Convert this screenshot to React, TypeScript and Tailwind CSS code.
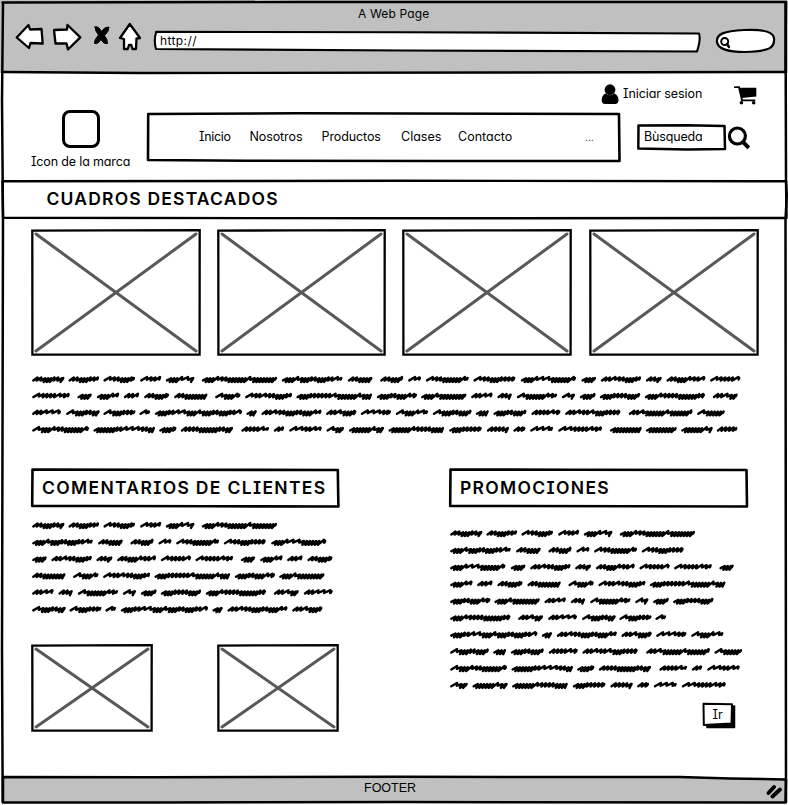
import React from "react";

const sketchFont = "font-['Inter','Noto_Sans',sans-serif] [font-feature-settings:'cv11','cv08','ss03'] text-black whitespace-nowrap";

/* Hand-drawn outline laid over a panel; d is drawn in the panel's own pixels. */
function Outline({ d, width = 2.6, fill = "none" }: { d: string; width?: number; fill?: string }) {
  return (
    <svg className="pointer-events-none absolute inset-0 h-full w-full overflow-visible" aria-hidden="true">
      <path d={d} fill={fill} stroke="#000" strokeWidth={width} strokeLinejoin="round" strokeLinecap="round" />
    </svg>
  );
}

function Picture({ w, h }: { w: number; h: number }) {
  return (
    <svg width={w} height={h} viewBox={`0 0 ${w} ${h}`} className="block shrink-0">
      <path d={`M5 5L${w - 5} ${h - 5}M${w - 5} 5L5 ${h - 5}`} stroke="#585858" strokeWidth="3" strokeLinecap="round" />
      <path d={`M1.3 1.6L${w * 0.45} 1.4L${w - 1.3} 1.2L${w - 1.4} ${h - 1.3}L${w * 0.3} ${h - 1.4}L1.4 ${h - 1.3}Z`} fill="none" stroke="#000" strokeWidth="2.3" />
    </svg>
  );
}

/* Scribbled filler words as [width, gap after], in thirds of a pixel. */
const WORDS: [number, number][] = [
  [98, 11], [93, 12], [96, 14], [64, 13], [87, 21], [227, 13],
  [183, 15], [75, 22], [70, 14], [40, 13], [130, 13], [127, 15],
  [167, 15], [45, 13], [122, 13], [49, 13], [118, 13], [92, 12],
  [114, 22], [44, 14], [68, 13], [47, 14], [76, 14], [101, 22],
  [77, 13], [142, 12], [228, 13], [122, 11], [137, 13], [65, 14],
  [44, 14], [122, 13], [41, 13], [48, 12], [122, 13], [182, 22],
  [76, 14], [88, 14], [102, 10], [97, 11], [33, 13], [263, 12],
  [32, 13], [181, 13], [92, 12], [92, 13], [98, 13], [117, 12],
  [40, 13], [100, 14], [88, 13], [167, 24], [192, 13], [84, 13],
  [172, 12], [186, 11], [53, 12], [158, 24], [84, 13], [32, 14],
  [99, 13], [54, 13], [107, 12], [168, 14], [99, 14], [68, 12],
  [37, 13], [70, 14], [133, 22], [97, 11], [94, 12], [96, 11], [63, 0],
];

/* One word: low tight strokes for round letters, long open strokes for thin ones. */
function scribble(x0: number, width: number, seed: number) {
  const end = x0 + width - 1.4;
  let x = x0 + 1.3;
  let n = (seed * 53 + 17) % 101;
  let d = `M${x.toFixed(1)} 10.4`;
  while (x < end - 3.6) {
    n = (n * 37 + 11) % 101;
    const kind = n % 3;
    const teeth = kind === 0 ? 3 : kind === 1 ? 2 : 1;
    const step = kind === 0 ? 3.1 : kind === 1 ? 3.8 : 6;
    const high = kind === 0 ? 8.2 : kind === 1 ? 7.4 : 7;
    const low = kind === 0 ? 12 : kind === 1 ? 10.6 : 9.8;
    for (let i = 0; i < teeth && x < end - 3.6; i++) {
      const top = Math.min(x + (kind === 2 ? 5.8 : 4.2), end);
      d += `L${top.toFixed(1)} ${high}`;
      x += step;
      if (x < end - 1) d += `L${(x - 0.4).toFixed(1)} ${low}`;
    }
  }
  return d + `L${end.toFixed(1)} 8L${(end - 0.7).toFixed(1)} 9.6`;
}

function Filler({ breaks, pitch, width }: { breaks: number[]; pitch: number; width: number }) {
  const rows = breaks.slice(0, -1).map((start, row) => {
    let x = 0;
    return WORDS.slice(start, breaks[row + 1]).map(([w, gap], i) => {
      const path = scribble(x, w / 3, start + i);
      x += (w + gap) / 3;
      return <path key={i} d={path} transform={`translate(0 ${row * pitch})`} />;
    });
  });
  return (
    <svg width={width} height={rows.length * pitch} className="block overflow-visible" fill="none" stroke="#000" strokeWidth="2.4" strokeLinejoin="round" strokeLinecap="round">
      {rows}
    </svg>
  );
}

function BrowserBar() {
  return (
    <header className="relative h-[73px] bg-[#c0c0c0]">
      <div className={`${sketchFont} pt-[6px] pl-[358px] text-[12px] leading-4 tracking-[0.15px]`}>A Web Page</div>
      <div className="flex pl-[14px]">
        <svg width="132" height="32" viewBox="14 22 132 32" fill="#fff" stroke="#000" strokeWidth="2.3" strokeLinejoin="round" strokeLinecap="round">
          <path d="M16.7 37.5L28.5 25L30 29.5L41.5 29L42.7 43.5L30.5 43L29 48Z" />
          <path d="M54 30L67 29.5L67.5 25L80.3 37.4L68 49.5L66.5 43.5L55.5 43.5Z" />
          <path d="M129.8 24L140 38L136.5 38.5L136 49L132.5 49L131.3 45L129 45L127.8 49L124 49L124 39L120 38Z" />
          <path d="M95 27Q98.5 25.5 101.5 31.5Q104.5 26.5 109 27Q109 31.5 104.5 35.5Q107.5 39 107.5 43.5Q103.5 44.5 101 39.5Q98 44.5 94.5 43.5Q94 40 98.5 35Q95 31 95 27Z" fill="#000" strokeWidth="1" />
        </svg>
        <div className="relative mt-[9px] ml-[8px] h-[20px] w-[547px]">
          <Outline fill="#fff" width={2.1} d="M2.2 .8L250 1.2L545 2.5Q547 8 543 20.5L250 19.5L2 18Q-.5 10 2.2 .8Z" />
          <span className={`${sketchFont} relative block pt-[2px] pl-[6px] text-[12px] leading-4 tracking-[0.4px]`}>http://</span>
        </div>
        <svg width="64" height="32" viewBox="712 22 64 32" className="ml-[11px]" fill="#fff" stroke="#000" strokeWidth="2.2" strokeLinecap="round">
          <path d="M717 42C716 34 724 31 744 30C763 29 773 32 774 38C775 48 770 51 745 52C728 52 718 49 717 42Z" />
          <circle cx="724.7" cy="41.5" r="3.5" strokeWidth="1.9" />
          <path d="M727 44L729 47" strokeWidth="2.4" />
        </svg>
      </div>
      <Outline width={2.4} d="M2.5 2.5L300 2L786 2L785.5 72L500 72.5L140 73L3 72" />
    </header>
  );
}

function SiteHeader() {
  return (
    <section className="h-[107px]">
      <div className="flex h-[37px] items-start pt-[10px] pl-[601px]">
        <svg width="19" height="22" viewBox="0 0 19 22" className="shrink-0">
          <circle cx="9" cy="6.7" r="5.4" />
          <path d="M4.5 10.5C2 11.5 .8 14 .7 17Q.7 21 4 21H14Q17.5 21 17.5 17C17.4 14 16 11.5 13.5 10.5Q9 14 4.5 10.5Z" />
        </svg>
        <span className={`${sketchFont} mt-[3px] ml-[3px] w-[111px] text-[12.5px] leading-4 tracking-[-0.08px]`}>Iniciar sesion</span>
        <svg width="23" height="20" viewBox="0 0 23 20" className="mt-[2px] shrink-0">
          <path d="M.8 2.2H5L8 15.3H20.5" fill="none" stroke="#000" strokeWidth="1.8" strokeLinecap="round" />
          <path d="M5.5 2.8H22.3V11.6L7.5 13Z" />
          <circle cx="7.4" cy="17.7" r="1.8" /><circle cx="19.7" cy="17.7" r="1.8" />
        </svg>
      </div>
      <div className="flex pl-[31px]">
        <div className="w-[116px]">
          <div className="ml-[30.5px] h-[38px] w-[38px] rounded-[8px] border-[3px] border-black" />
          <div className={`${sketchFont} mt-[6px] text-[12.5px] leading-4 tracking-[-0.15px]`}>Icon de la marca</div>
        </div>
        <nav className={`${sketchFont} relative mt-[2px] flex h-[50px] w-[474px] items-center text-[12.5px] leading-4`}>
          <Outline d="M1.2 2L150 1.3L472 2L472.5 49L300 49L100 48.8L1 48Z" />
          <span className="ml-[52px] w-[50.5px] pb-px tracking-[-0.3px]">Inicio</span>
          <span className="w-[72px] pb-px tracking-[-0.1px]">Nosotros</span>
          <span className="w-[79.5px] pb-px tracking-[-0.1px]">Productos</span>
          <span className="w-[57px] pb-px">Clases</span>
          <span className="w-[127px] pb-px">Contacto</span>
          <span className="text-[10px] text-gray-900">...</span>
        </nav>
        <div className={`${sketchFont} relative mt-[14px] ml-[16px] h-[26px] w-[89px] text-[12.5px] leading-4`}>
          <Outline width={2.5} d="M1.5 1.5L50 1.3L87.5 2L88 25L50 25.5L1.3 24.5Z" />
          <span className="block pt-[5px] pl-[7px] tracking-[-0.15px]">Bùsqueda</span>
        </div>
        <svg width="24" height="25" viewBox="0 0 24 25" className="mt-[16px] ml-[1px]" fill="none" stroke="#000">
          <circle cx="10.4" cy="10" r="8" strokeWidth="3.2" />
          <path d="M16 16L21.8 21.8" strokeWidth="4" />
        </svg>
      </div>
    </section>
  );
}

function PanelTitle({ children, wide }: { children: string; wide?: boolean }) {
  return (
    <h2 className={`${sketchFont} relative flex h-[40px] items-center pl-[11px] text-[17.5px] leading-6 font-semibold ${wide ? "w-[308px] tracking-[1.33px]" : "w-[299px] tracking-[1.32px]"}`}>
      <Outline d={wide ? "M1.5 1.5L120 1.8L306.8 2L307.4 38.5L180 38.3L60 38L1.2 38Z" : "M1.5 1.5L120 1.8L297.5 2L298 38.5L180 38.3L60 38L1.2 38Z"} />
      {children}
    </h2>
  );
}

export default function App() {
  return (
    <div className="relative h-[805px] w-[788px] overflow-hidden bg-white">
      <BrowserBar />
      <SiteHeader />
      <section className="relative h-[39px]">
        <Outline width={2.4} d="M2.5 1.2L400 .8L786 1.2L786.5 38L450 38.3L3 37.8Z" />
        <h1 className={`${sketchFont} pt-[7px] pl-[46.5px] text-[17.5px] leading-6 font-semibold tracking-[1.19px]`}>CUADROS DESTACADOS</h1>
      </section>
      <main className="h-[557px] px-[31px] pt-[10px]">
        <div className="flex">
          <div className="w-[186px] shrink-0"><Picture w={170} h={127} /></div>
          <div className="w-[185px] shrink-0"><Picture w={169} h={127} /></div>
          <div className="w-[187px] shrink-0"><Picture w={170} h={127} /></div>
          <Picture w={170} h={127} />
        </div>
        <div className="pt-[14px] pl-[1px]"><Filler breaks={[0, 18, 37, 54, 73]} pitch={16.7} width={710} /></div>
        <div className="mt-[31.2px] flex gap-[110px]">
          <section>
            <PanelTitle wide>COMENTARIOS DE CLIENTES</PanelTitle>
            <div className="pt-[8px] pl-[1px]"><Filler breaks={[0, 6, 13, 23, 29, 38, 45]} pitch={16.8} width={302} /></div>
            <div className="mt-[27px] flex gap-[64px]">
              <Picture w={122} h={88} />
              <Picture w={122} h={88} />
            </div>
          </section>
          <section>
            <PanelTitle>PROMOCIONES</PanelTitle>
            <div className="pt-[16px] pl-[1px]"><Filler breaks={[0, 6, 12, 20, 27, 35, 41, 47, 54, 61, 69]} pitch={16.88} width={292} /></div>
            <button className={`${sketchFont} relative mt-[10.2px] ml-[254px] flex h-[25px] w-[32px] items-center justify-center text-[12.5px]`}>
              <Outline fill="#000" width={1.5} d="M4 5L31.5 3L31.5 24.5L4 24.5Z" />
              <Outline fill="#fff" width={2} d="M.5 .7L29 1.2L28.5 20.5L.8 22Z" />
              <span className="relative pr-[3px]">Ir</span>
            </button>
          </section>
        </div>
      </main>
      <footer className="relative h-[29px]">
        <Outline fill="#c0c0c0" width={2.5} d="M3 1L150 1.3L400 .8L680 1L730 2.5L786 3.5L785.5 26.5L400 26L150 26.5L3 26.5Z" />
        <div className="relative pt-[4px] pl-[364px] font-['Liberation_Sans',sans-serif] text-[12.5px] leading-4 text-black">FOOTER</div>
        <svg width="18" height="16" viewBox="0 0 18 16" className="absolute top-[8px] right-[4px]" stroke="#000" strokeWidth="3.8" strokeLinecap="round">
          <path d="M2.5 9L8 3M6.5 12.5L14 5.5" />
        </svg>
      </footer>
      <Outline width={2.5} d="M3 3L2 100L3 220L2 650L2.7 802M785.5 3L786 180L786.8 195L785.5 220L786 802" />
    </div>
  );
}
